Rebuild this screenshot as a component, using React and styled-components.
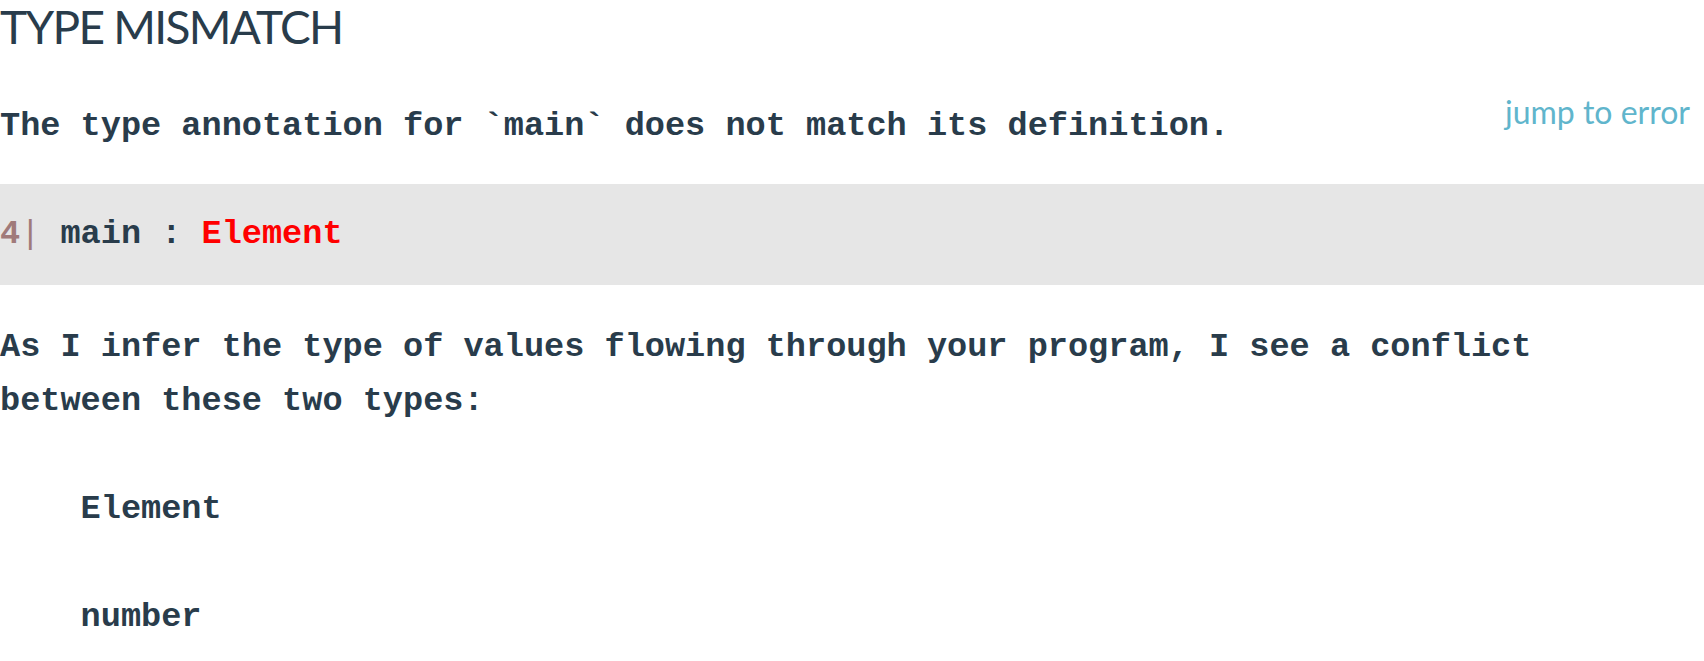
import React from 'react';
import styled, { createGlobalStyle } from 'styled-components';

const GlobalStyle = createGlobalStyle`
  html, body {
    margin: 0;
    padding: 0;
    background: #ffffff;
  }
`;

const Page = styled.div`
  color: #293c4b;
  width: 1704px;
  overflow: hidden;
`;

const Title = styled.h1`
  margin: 0;
  padding-right: 8px;
  font-family: Lato, "Open Sans", sans-serif;
  font-weight: 400;
  font-size: 46px;
  line-height: 53px;
  letter-spacing: -1.7px;
  color: #293c4b;
`;

const Header = styled.div`
  display: flex;
  justify-content: space-between;
  align-items: flex-start;
  margin-top: 46px;
`;

const JumpLink = styled.a`
  font-family: Lato, "Open Sans", sans-serif;
  font-size: 32px;
  color: #60b5cc;
  text-decoration: none;
  margin-right: 14px;
  margin-top: -7px;
  cursor: pointer;
`;

const Mono = styled.pre`
  margin: 0;
  font-family: "Liberation Mono", "Courier New", monospace;
  font-weight: 700;
  font-size: 33.6px;
  line-height: 54px;
  color: #293c4b;
  white-space: pre;
`;

const CodeBlock = styled.div`
  background: #e6e6e6;
  margin-top: 31px;
  padding: 23px 0 24px;
`;

const LineNo = styled.span`
  color: #a07a7a;
`;

const Gutter = styled.span`
  color: #a07a7a;
  font-weight: 400;
`;

const Highlight = styled.span`
  color: #ff0000;
`;

const Body = styled(Mono)`
  margin-top: 35px;
`;

export default function App() {
  return (
    <Page>
      <GlobalStyle />
      <Title>TYPE MISMATCH</Title>
      <Header>
        <Mono>The type annotation for `main` does not match its definition.</Mono>
        <JumpLink>jump to error</JumpLink>
      </Header>
      <CodeBlock>
        <Mono>
          <LineNo>4</LineNo><Gutter>|</Gutter> main : <Highlight>Element</Highlight>
        </Mono>
      </CodeBlock>
      <Body>
        {`As I infer the type of values flowing through your program, I see a conflict
between these two types:

    Element

    number`}
      </Body>
    </Page>
  );
}
